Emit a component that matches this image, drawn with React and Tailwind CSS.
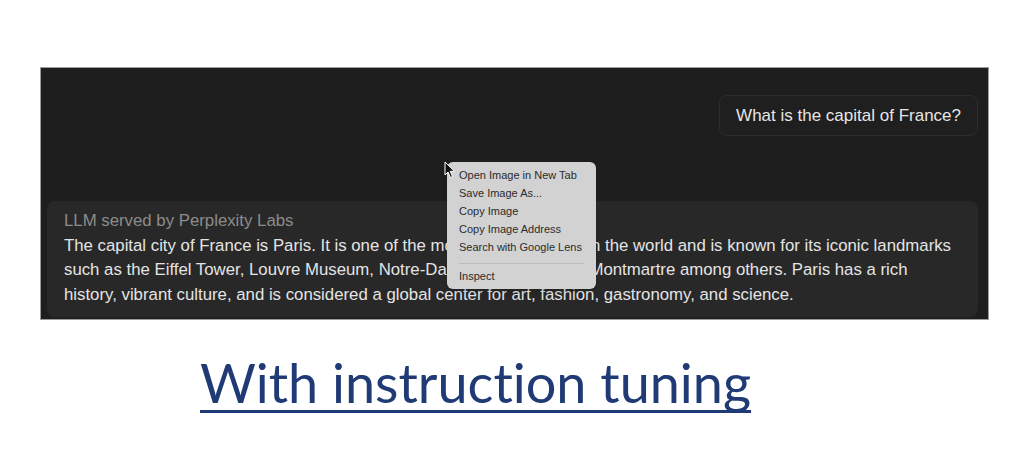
import React from 'react';

const menuItems = [
  'Open Image in New Tab',
  'Save Image As...',
  'Copy Image',
  'Copy Image Address',
  'Search with Google Lens',
];

const answerLines = [
  'The capital city of France is Paris. It is one of the most populous cities in the world and is known for its iconic landmarks',
  'such as the Eiffel Tower, Louvre Museum, Notre-Dame Cathedral, and Montmartre among others. Paris has a rich',
  'history, vibrant culture, and is considered a global center for art, fashion, gastronomy, and science.',
];

const Cursor = () => (
  <svg width="12" height="18" viewBox="0 0 12 18" className="absolute left-[403px] top-[93px]">
    <path d="M1 1 L1 14 L4 11 L6.5 16.5 L8.5 15.6 L6.2 10.3 L10.5 10.3 Z" fill="#111" stroke="#fff" strokeWidth="1" />
  </svg>
);

const App = () => {
  return (
    <div className="w-[1030px] h-[457px] bg-white overflow-hidden font-['Liberation_Sans',Arial,sans-serif]">
      <div className="pt-[67px] pl-[40px]">
        {/* screenshot panel */}
        <div className="relative w-[949px] h-[253px] bg-[#1e1e1e] border border-[#9c9c9c] flex flex-col pl-[6px] pr-[10px]">
          <div className="flex justify-end mt-[27px]">
            <div className="h-[41px] px-[16px] flex items-center rounded-lg border border-[#2c2c2c] bg-[#1f1f1f] text-[#e6e6e6] text-[17px]">
              What is the capital of France?
            </div>
          </div>
          <div className="mt-[65px] rounded-lg bg-[#282828] pt-[8px] pb-[10px] px-[17px] text-[16.8px] leading-[24.5px]">
            <div className="text-[#8c8c8c]">LLM served by Perplexity Labs</div>
            <div className="text-[#e4e4e4] whitespace-nowrap">
              {answerLines.map((line) => (
                <div key={line}>{line}</div>
              ))}
            </div>
          </div>

          {/* context menu */}
          <div className="absolute left-[406px] top-[94px] w-[149px] rounded-md bg-[#d2d2d2] shadow-md pt-[4px] pb-[4px] text-[11px] text-[#2b2b2b]">
            {menuItems.map((item) => (
              <div key={item} className="h-[18px] flex items-center px-[12px]">{item}</div>
            ))}
            <div className="mx-[12px] mt-[7px] mb-[3px] h-px bg-[#bdbdbd]" />
            <div className="h-[18px] flex items-center px-[12px]">Inspect</div>
          </div>
          <Cursor />
        </div>

        <div className="pl-[160px] mt-[30px]">
          <span className="font-['Lato',sans-serif] text-[54px] leading-[66px] text-[#1f3a75] underline decoration-[3px] underline-offset-[7px] [text-decoration-skip-ink:none] [font-variant-ligatures:none]">
            With instruction tuning
          </span>
        </div>
      </div>
    </div>
  );
};

export default App;
